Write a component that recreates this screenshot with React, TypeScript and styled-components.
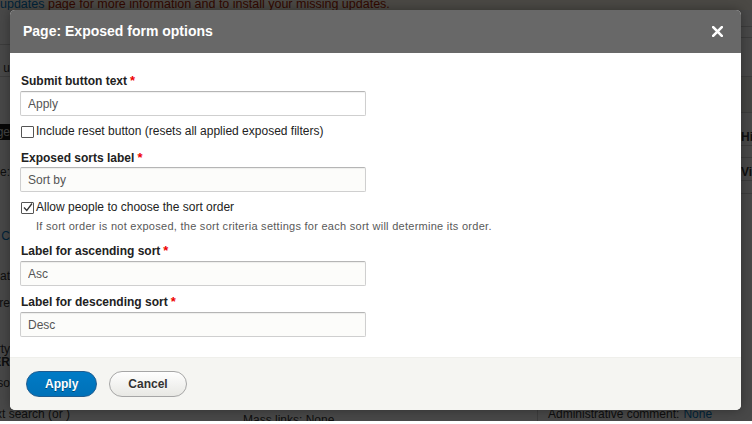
import React from 'react'
import styled, { createGlobalStyle } from 'styled-components'

const GlobalStyle = createGlobalStyle`
    html, body {
        margin: 0;
        padding: 0;
        background: #fff;
    }
    body {
        font-family: "Liberation Sans", Arial, sans-serif;
        font-size: 12px;
        color: #222;
    }
`

// ---------- page behind the dialog ----------

const Page = styled.div`
    position: relative;
    width: 752px;
    height: 421px;
    overflow: hidden;
    background: #fff;
    display: flex;
    flex-direction: column;
`

const Message = styled.div`
    height: 10px;
    flex: none;
    display: flex;
    align-items: flex-end;
    overflow: hidden;
    background: #fcf4e6;
    color: #a51b00;
    white-space: nowrap;
    line-height: 12px;
    font-size: 12.5px;
`

const Link = styled.span`
    color: #0074bd;
`

const Middle = styled.div`
    flex: 1;
    display: grid;
    grid-template-columns: 10px 1fr 11px;
    background: #f2f2f0;
`

const Side = styled.div`
    display: flex;
    flex-direction: column;
    overflow: hidden;
`

const Frag = styled.div<{ $h: number; $bg?: string; $color?: string; $bold?: boolean; $line?: boolean }>`
    height: ${(p) => p.$h}px;
    flex: none;
    width: 100%;
    display: flex;
    align-items: flex-end;
    white-space: nowrap;
    overflow: hidden;
    background: ${(p) => p.$bg || 'transparent'};
    color: ${(p) => p.$color || '#333'};
    font-weight: ${(p) => (p.$bold ? 'bold' : 'normal')};
    border-bottom: ${(p) => (p.$line ? '1px solid #c8c8c8' : 'none')};
    box-sizing: border-box;
    line-height: 15px;
`

const LeftFrag = styled(Frag)`
    justify-content: flex-end;
`

const RightFrag = styled(Frag)`
    justify-content: flex-start;
`

const Bottom = styled.div`
    height: 14px;
    flex: none;
    display: grid;
    grid-template-columns: 70px 173px 294px 1fr;
    background: #f2f2f0;
    white-space: nowrap;
    overflow: hidden;
    line-height: 14px;
`

const BottomCell = styled.div<{ $pad?: number; $border?: boolean; $end?: boolean; $down?: boolean }>`
    display: flex;
    justify-content: ${(p) => (p.$end ? 'flex-end' : 'flex-start')};
    align-items: ${(p) => (p.$down ? 'flex-end' : 'flex-start')};
    overflow: hidden;
    padding-left: ${(p) => p.$pad || 0}px;
    border-left: ${(p) => (p.$border ? '1px solid #c8c8c8' : 'none')};
    color: #333;
`

const Sunk = styled.span`
    transform: translateY(6px);
`

const Muted = styled.span`
    color: #0074bd;
    margin-left: 4px;
`

const Overlay = styled.div`
    position: absolute;
    inset: 0;
    background: rgba(0, 0, 0, 0.7);
`

// ---------- dialog ----------

const Dialog = styled.div`
    position: absolute;
    top: 10px;
    left: 10px;
    width: 731px;
    display: flex;
    flex-direction: column;
    background: #fff;
    border-radius: 5px;
    overflow: hidden;
    box-shadow: 0 0 12px rgba(0, 0, 0, 0.35);
`

const TitleBar = styled.div`
    display: flex;
    align-items: center;
    justify-content: space-between;
    padding: 13px 18px 13px 13px;
    background: #686868;
`

const Title = styled.h1`
    margin: 0;
    font-size: 14px;
    line-height: 17px;
    font-weight: bold;
    color: #fff;
`

const Close = styled.button`
    width: 11px;
    height: 11px;
    padding: 0;
    border: 0;
    background: none;
    display: flex;
`

const Content = styled.div`
    padding: 21px 10px 20px 10px;
    display: flex;
    flex-direction: column;
`

const Field = styled.div<{ $mb: number }>`
    display: flex;
    flex-direction: column;
    align-items: flex-start;
    margin-bottom: ${(p) => p.$mb}px;
`

const Label = styled.label<{ $mb: number }>`
    display: block;
    height: 15px;
    padding-left: 1px;
    margin-bottom: ${(p) => p.$mb}px;
    font-size: 12px;
    line-height: 15px;
    font-weight: bold;
    color: #222;
`

const Required = styled.span`
    color: #e00;
    font-size: 13px;
    line-height: 0;
    margin-left: 3px;
`

const TextInput = styled.input<{ $bg?: string }>`
    box-sizing: border-box;
    width: 346px;
    height: 25px;
    margin: 0;
    padding: 0 7px;
    border: 1px solid #cfcfcf;
    border-top-color: #b5b5b5;
    border-radius: 2px;
    background: ${(p) => p.$bg || '#fcfcfa'};
    box-shadow: inset 0 1px 1px rgba(0, 0, 0, 0.06);
    font-family: "Liberation Sans", Arial, sans-serif;
    font-size: 12px;
    color: #555;
    outline: none;
`

const CheckItem = styled.div<{ $mb: number }>`
    display: flex;
    flex-direction: column;
    margin-bottom: ${(p) => p.$mb}px;
`

const CheckRow = styled.label`
    display: flex;
    align-items: center;
    gap: 2px;
    padding-left: 1px;
    height: 15px;
    line-height: 15px;
    font-size: 12px;
    color: #222;
`

const Box = styled.span`
    box-sizing: border-box;
    width: 13px;
    height: 12px;
    border: 1px solid #555;
    border-radius: 1px;
    background: #fff;
    display: flex;
    align-items: center;
    justify-content: center;
    flex: none;
`

const Description = styled.div`
    margin-top: 4px;
    padding-left: 16px;
    font-size: 11px;
    line-height: 15px;
    color: #595959;
    letter-spacing: 0.27px;
`

const Footer = styled.div`
    display: flex;
    align-items: center;
    gap: 12px;
    padding: 13px 16px 13px 16px;
    background: #f5f5f2;
    border-top: 1px solid #efefeb;
`

const Button = styled.button<{ $primary?: boolean }>`
    box-sizing: border-box;
    height: 26px;
    padding: 0 18px;
    border-radius: 20px;
    border: 1px solid ${(p) => (p.$primary ? '#1e5c90' : '#a6a6a6')};
    background: ${(p) =>
        p.$primary
            ? 'linear-gradient(to bottom, #007bc6, #0071b8)'
            : 'linear-gradient(to bottom, #fefefe, #e8e8e4)'};
    color: ${(p) => (p.$primary ? '#fff' : '#333')};
    font-family: "Liberation Sans", Arial, sans-serif;
    font-size: 12px;
    font-weight: bold;
    line-height: 24px;
    text-shadow: ${(p) => (p.$primary ? '0 1px rgba(0,0,0,0.4)' : '0 1px hsla(0,0%,100%,0.6)')};
`

const CloseIcon = () => (
    <svg width="11" height="11" viewBox="0 0 11 11">
        <path d="M1.2 1.2 L9.8 9.8 M9.8 1.2 L1.2 9.8" stroke="#fff" strokeWidth="2.6" strokeLinecap="square" />
    </svg>
)

const CheckIcon = () => (
    <svg width="10" height="9" viewBox="0 0 10 9">
        <path d="M1 4.5 L3.8 7.5 L9 0.5" stroke="#333" strokeWidth="1.3" fill="none" />
    </svg>
)

const leftBits = [
    { h: 35, line: true },
    { h: 32, text: 'u', line: true },
    { h: 47 },
    { h: 16, text: 'Page', bg: '#1a1a1a', color: '#ddd' },
    { h: 40, text: 'Title:' },
    { h: 64, text: 'Content: C', color: '#0074bd' },
    { h: 40, text: 'Format' },
    { h: 27, text: 'there' },
    { h: 46, text: 'Property' },
    { h: 13, text: 'FILTER', bold: true },
    { h: 21, text: 'Also' },
]

const rightBits = [
    { h: 17, line: true },
    { h: 11, line: true },
    { h: 39, line: true },
    { h: 36, bg: '#e6e6e2', line: true },
    { h: 10 },
    { h: 23, text: 'Hide', bold: true, line: true },
    { h: 12, line: true },
    { h: 23, text: 'View', bold: true, line: true },
    { h: 13, line: true },
]

const App = () => {
    return <>
        <GlobalStyle />
        <Page>
            <Message>
                <span><Link>updates</Link> page for more information and to install your missing updates.</span>
            </Message>
            <Middle>
                <Side>
                    {leftBits.map((b, i) => (
                        <LeftFrag key={i} $h={b.h} $bg={b.bg} $color={b.color} $bold={b.bold} $line={b.line}>
                            {b.text}
                        </LeftFrag>
                    ))}
                </Side>
                <div />
                <Side>
                    {rightBits.map((b, i) => (
                        <RightFrag key={i} $h={b.h} $bg={b.bg} $bold={b.bold} $line={b.line}>
                            {b.text}
                        </RightFrag>
                    ))}
                </Side>
            </Middle>
            <Bottom>
                <BottomCell $end>Context search (or )</BottomCell>
                <BottomCell />
                <BottomCell><Sunk>Mass links: None</Sunk></BottomCell>
                <BottomCell $pad={10} $border>Administrative comment:<Muted>None</Muted></BottomCell>
            </Bottom>
            <Overlay />
            <Dialog role='dialog'>
                <TitleBar>
                    <Title>Page: Exposed form options</Title>
                    <Close aria-label='Close'><CloseIcon /></Close>
                </TitleBar>
                <Content>
                    <Field $mb={8}>
                        <Label $mb={2}>Submit button text<Required>*</Required></Label>
                        <TextInput $bg='#fff' defaultValue='Apply' />
                    </Field>
                    <CheckItem $mb={12}>
                        <CheckRow><Box />Include reset button (resets all applied exposed filters)</CheckRow>
                    </CheckItem>
                    <Field $mb={8}>
                        <Label $mb={1}>Exposed sorts label<Required>*</Required></Label>
                        <TextInput defaultValue='Sort by' />
                    </Field>
                    <CheckItem $mb={10}>
                        <CheckRow><Box><CheckIcon /></Box>Allow people to choose the sort order</CheckRow>
                        <Description>If sort order is not exposed, the sort criteria settings for each sort will determine its order.</Description>
                    </CheckItem>
                    <Field $mb={9}>
                        <Label $mb={2}>Label for ascending sort<Required>*</Required></Label>
                        <TextInput defaultValue='Asc' />
                    </Field>
                    <Field $mb={0}>
                        <Label $mb={2}>Label for descending sort<Required>*</Required></Label>
                        <TextInput defaultValue='Desc' />
                    </Field>
                </Content>
                <Footer>
                    <Button $primary>Apply</Button>
                    <Button>Cancel</Button>
                </Footer>
            </Dialog>
        </Page>
    </>
}

export default App
